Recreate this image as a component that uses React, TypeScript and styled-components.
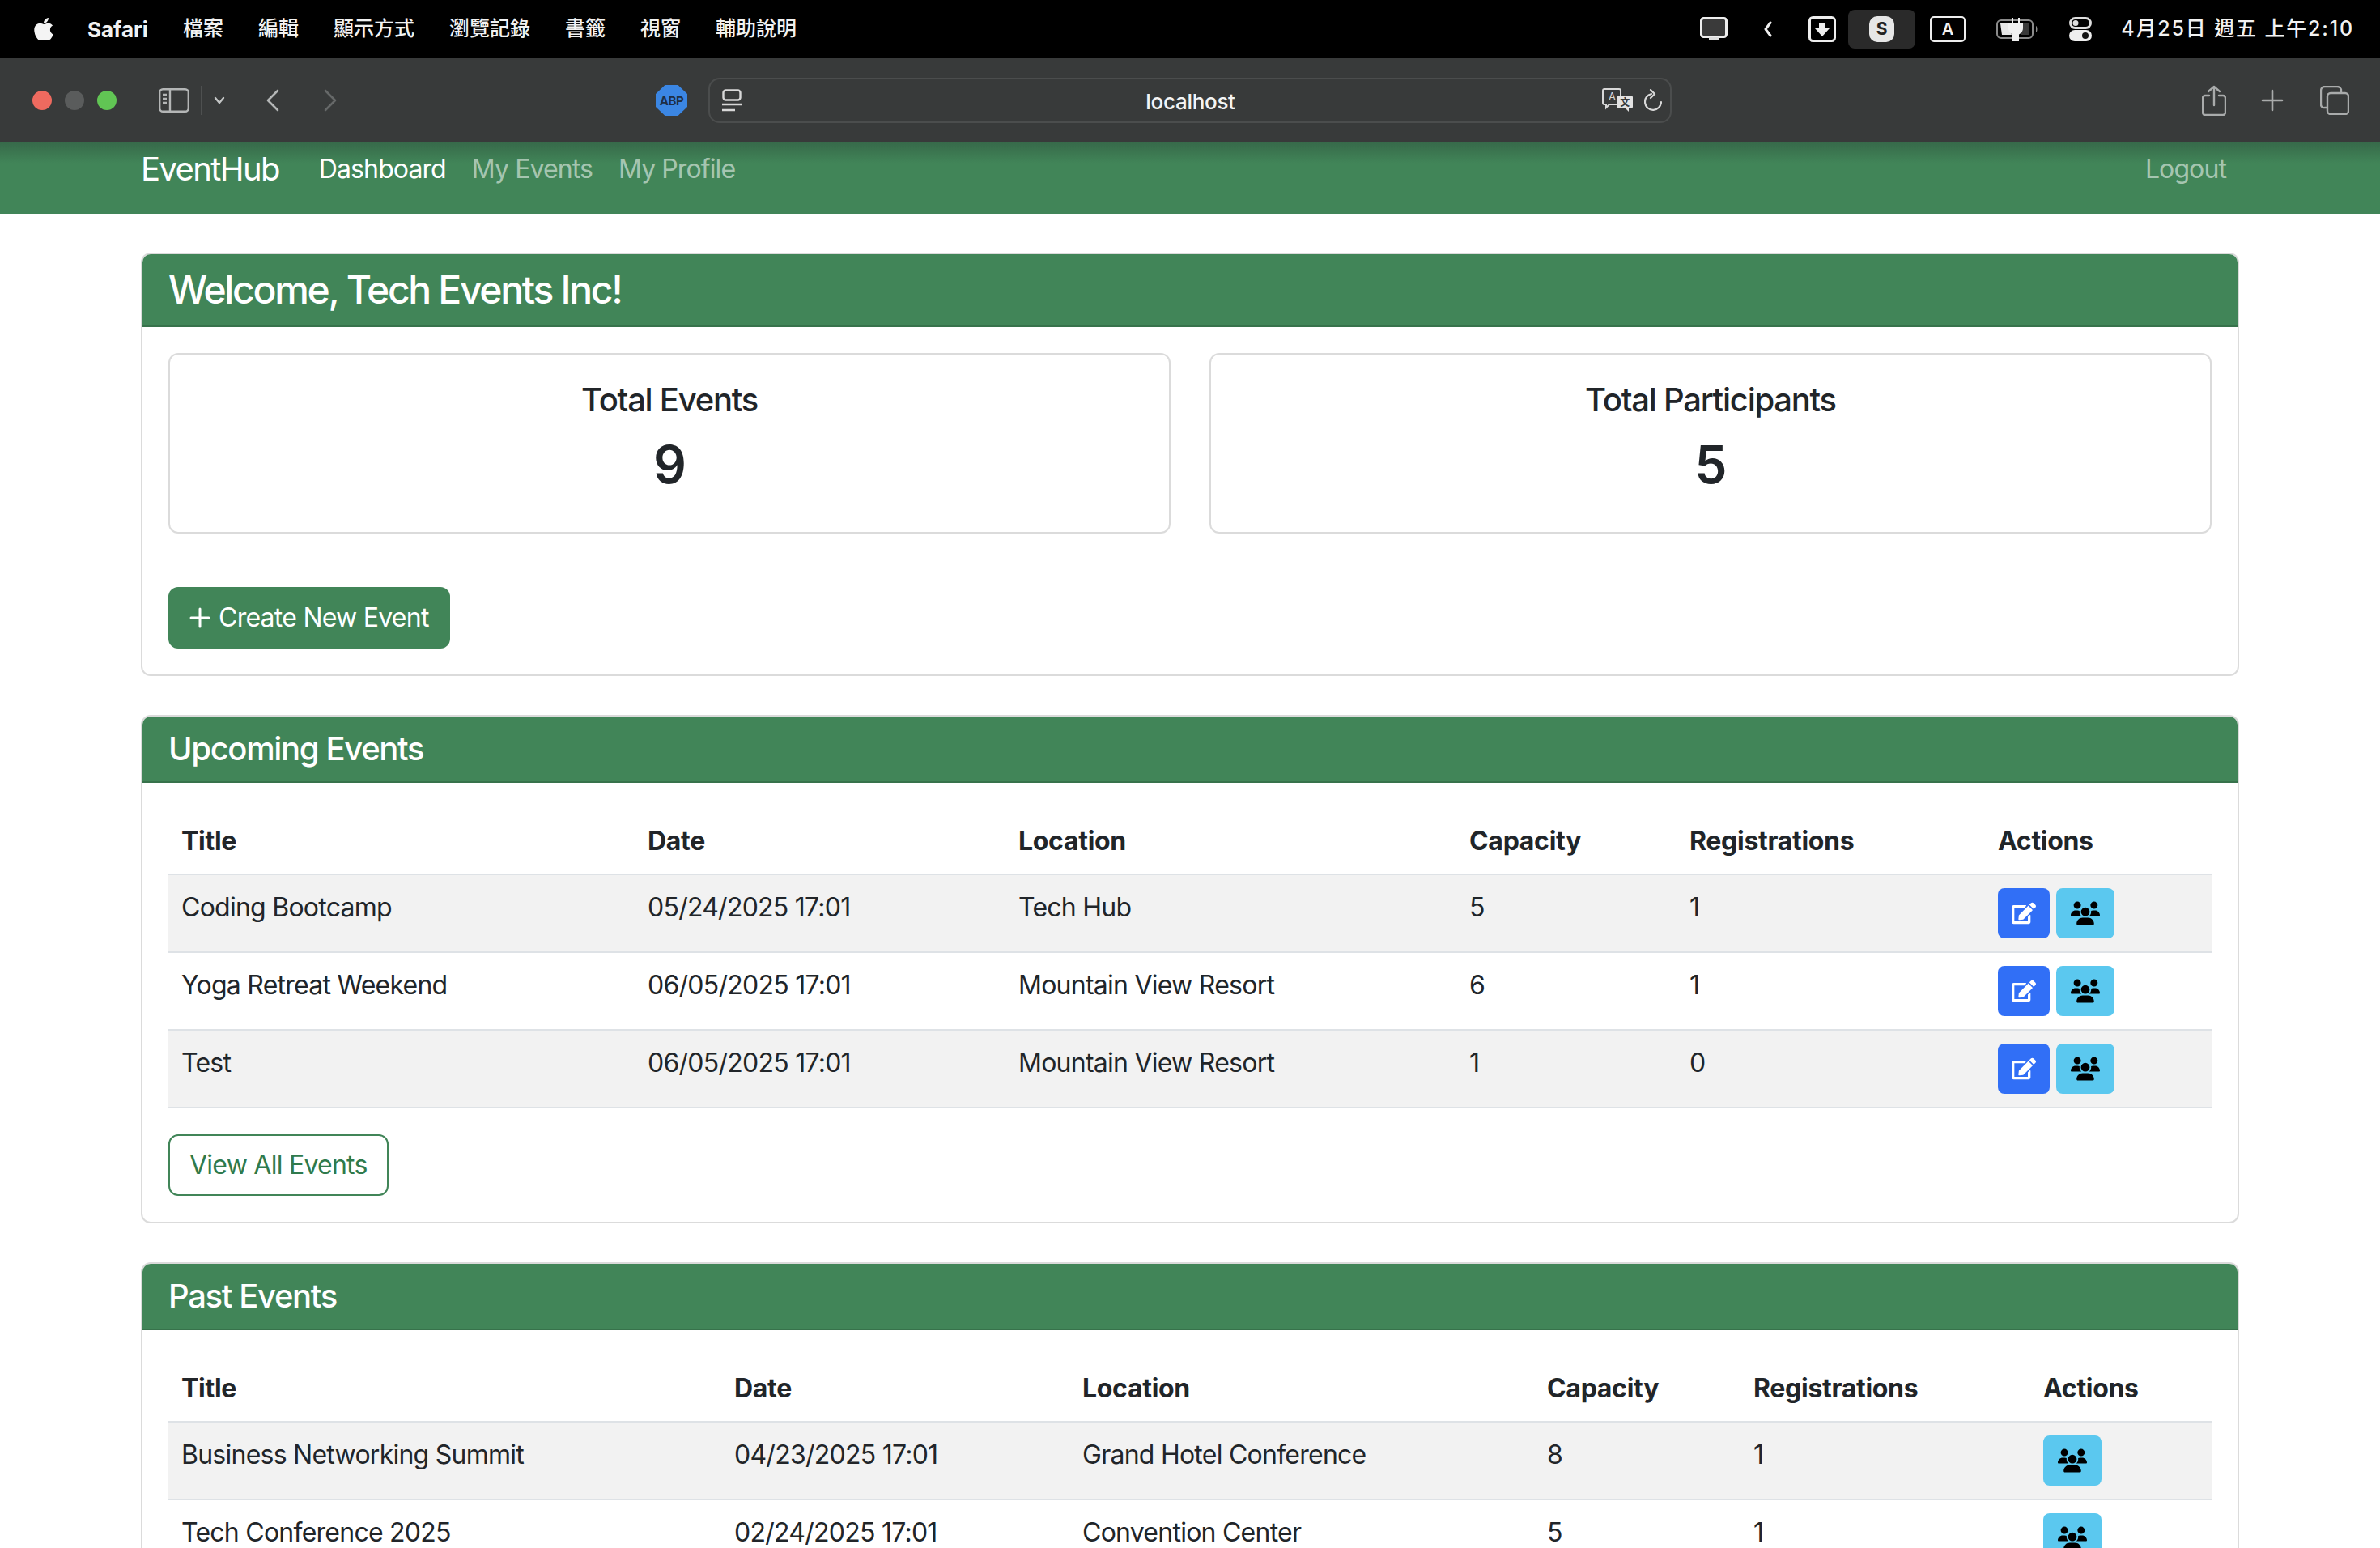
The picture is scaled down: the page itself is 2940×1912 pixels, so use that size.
import React from "react";
import styled, { createGlobalStyle } from "styled-components";
import { FaApple, FaEdit } from "react-icons/fa";
import { FaUsers } from "react-icons/fa6";

const GREEN = "#418558";

const GlobalStyle = createGlobalStyle`
  html, body {
    margin: 0;
    height: 1912px;
    overflow: hidden;
    background: #fff;
  }
  body {
    font-family: Inter, "Noto Sans", sans-serif;
    font-size: 32px;
    line-height: 1.5;
    letter-spacing: -0.75px;
    color: #212529;
  }
  * {
    box-sizing: border-box;
  }
`;

const MenuBar = styled.div`
  display: flex;
  align-items: center;
  justify-content: space-between;
  height: 72px;
  padding: 0 32px 0 38px;
  background: #000;
  color: #f2f2f2;
  font-family: Inter, "Noto Sans CJK TC", sans-serif;
  font-size: 25px;
  letter-spacing: 0;
`;

const MenuGroup = styled.div`
  display: flex;
  align-items: center;
`;

const MenuItem = styled.span<{ $bold?: boolean }>`
  margin-left: ${(p) => (p.$bold ? "38px" : "43px")};
  font-weight: ${(p) => (p.$bold ? 700 : 500)};
  font-size: ${(p) => (p.$bold ? "26px" : "25px")};
  white-space: nowrap;
`;

const Status = styled.div<{ $ml: number }>`
  display: flex;
  margin-left: ${(p) => p.$ml}px;
`;

const Highlight = styled.div`
  display: flex;
  align-items: center;
  justify-content: center;
  width: 83px;
  height: 48px;
  margin-left: 15px;
  border-radius: 8px;
  background: #2a2a2a;
`;

const SBadge = styled.span`
  display: flex;
  align-items: center;
  justify-content: center;
  width: 31px;
  height: 32px;
  border-radius: 10px;
  background: #e6e6e6;
  color: #222;
  font-size: 21px;
  font-weight: 700;
`;

const ABadge = styled.span`
  display: flex;
  align-items: center;
  justify-content: center;
  width: 44px;
  height: 32px;
  margin-left: 18px;
  border: 2px solid #eee;
  border-radius: 5px;
  font-size: 20px;
  font-weight: 600;
`;

const Clock = styled.span`
  margin-left: 36px;
  font-size: 25px;
  font-weight: 500;
  letter-spacing: 1.85px;
  white-space: nowrap;
`;

const Toolbar = styled.div`
  display: flex;
  align-items: center;
  height: 104px;
  padding: 0 38px 0 40px;
  background: #383a3a;
  color: #b4b6b6;
`;

const Lights = styled.div`
  display: flex;
  gap: 16px;
`;

const Light = styled.span<{ $color: string }>`
  width: 24px;
  height: 24px;
  border-radius: 50%;
  background: ${(p) => p.$color};
`;

const ToolIcon = styled.div<{ $ml: number }>`
  display: flex;
  margin-left: ${(p) => p.$ml}px;
`;

const Divider = styled.span`
  width: 2px;
  height: 36px;
  margin-left: 14px;
  background: #4e5050;
`;

const AddressBar = styled.div`
  display: flex;
  align-items: center;
  width: 1190px;
  height: 56px;
  margin-left: 26px;
  padding: 0 10px 0 15px;
  border: 2px solid #4b4d4d;
  border-radius: 14px;
`;

const Url = styled.span`
  flex: 1;
  padding: 2px 0 0 46px;
  color: #f4f4f4;
  font-size: 26px;
  font-weight: 500;
  letter-spacing: -0.3px;
  text-align: center;
`;

const ToolbarRight = styled.div`
  display: flex;
  align-items: center;
  margin-left: auto;
`;

const Navbar = styled.nav`
  height: 88px;
  background: linear-gradient(#376a4a 0, ${GREEN} 26px);
`;

const NavInner = styled.div`
  display: flex;
  align-items: center;
  width: 2592px;
  height: 66px;
  margin: 0 auto;
`;

const Brand = styled.a`
  margin-right: 33px;
  color: #fff;
  font-size: 40px;
  letter-spacing: -1.6px;
`;

const NavLink = styled.a<{ $active?: boolean }>`
  padding: 0 16px;
  color: ${(p) => (p.$active ? "#fff" : "rgba(255, 255, 255, 0.55)")};
  font-size: 32px;
  letter-spacing: -0.9px;
`;

const NavEnd = styled.div`
  margin-left: auto;
`;

const Page = styled.main`
  width: 2592px;
  margin: 0 auto;
  padding-top: 48px;
`;

const Card = styled.section`
  margin-bottom: 48px;
  border: 2px solid rgba(0, 0, 0, 0.14);
  border-radius: 12px;
  background: #fff;
`;

const CardHeader = styled.header`
  padding: 16px 32px;
  border-bottom: 2px solid rgba(0, 0, 0, 0.14);
  border-radius: 10px 10px 0 0;
  background: ${GREEN};
  color: #fff;
`;

const CardTitle = styled.h2<{ $large?: boolean }>`
  margin: 0;
  font-size: ${(p) => (p.$large ? "48px" : "40px")};
  font-weight: 500;
  line-height: ${(p) => (p.$large ? "56px" : "48px")};
  letter-spacing: ${(p) => (p.$large ? "-2.3px" : "-1.35px")};
`;

const CardBody = styled.div`
  padding: 32px;
`;

const Stats = styled.div`
  display: grid;
  grid-template-columns: 1fr 1fr;
  gap: 48px;
  margin-bottom: 66px;
`;

const StatCard = styled.div`
  padding: 32px;
  border: 2px solid rgba(0, 0, 0, 0.14);
  border-radius: 12px;
  text-align: center;
`;

const StatLabel = styled.h3`
  margin: 0 0 18px;
  font-size: 40px;
  font-weight: 500;
  line-height: 1.2;
  letter-spacing: -1.25px;
`;

const StatValue = styled.p`
  margin: 0 0 12px;
  font-size: 64px;
  font-weight: 600;
  line-height: 1.2;
`;

const Button = styled.a<{ $outline?: boolean }>`
  display: inline-flex;
  align-items: center;
  height: 76px;
  padding: 0 24px;
  border: 2px solid ${GREEN};
  border-radius: 12px;
  background: ${(p) => (p.$outline ? "#fff" : GREEN)};
  color: ${(p) => (p.$outline ? "#2f7a4c" : "#fff")};
  font-size: 32px;
`;

const PlusMark = styled.svg`
  margin-right: 10px;
`;

const Table = styled.table`
  width: 100%;
  margin-bottom: 32px;
  border-collapse: collapse;
  table-layout: fixed;
`;

const Column = styled.col<{ $w: number }>`
  width: ${(p) => p.$w}px;
`;

const Th = styled.th`
  padding: 16px;
  border-bottom: 2px solid #dee2e6;
  font-weight: 700;
  letter-spacing: -0.3px;
  text-align: left;
`;

const Row = styled.tr`
  &:nth-child(odd) {
    background: #f2f2f2;
  }
`;

const Td = styled.td`
  height: 96px;
  padding: 16px;
  border-bottom: 2px solid #dee2e6;
  vertical-align: top;
  white-space: nowrap;
`;

const Actions = styled.div`
  display: flex;
  gap: 8px;
`;

const ActionButton = styled.a<{ $kind: "edit" | "people" }>`
  display: flex;
  align-items: center;
  justify-content: center;
  width: ${(p) => (p.$kind === "edit" ? "64px" : "72px")};
  height: 62px;
  border-radius: 8px;
  background: ${(p) => (p.$kind === "edit" ? "#316ff6" : "#5bc8ef")};
  color: ${(p) => (p.$kind === "edit" ? "#fff" : "#000")};
`;

type EventRow = {
  title: string;
  date: string;
  location: string;
  capacity: number;
  registrations: number;
};

const upcoming: EventRow[] = [
  { title: "Coding Bootcamp", date: "05/24/2025 17:01", location: "Tech Hub", capacity: 5, registrations: 1 },
  { title: "Yoga Retreat Weekend", date: "06/05/2025 17:01", location: "Mountain View Resort", capacity: 6, registrations: 1 },
  { title: "Test", date: "06/05/2025 17:01", location: "Mountain View Resort", capacity: 1, registrations: 0 },
];

const past: EventRow[] = [
  { title: "Business Networking Summit", date: "04/23/2025 17:01", location: "Grand Hotel Conference", capacity: 8, registrations: 1 },
  { title: "Tech Conference 2025", date: "02/24/2025 17:01", location: "Convention Center", capacity: 5, registrations: 1 },
];

const EventsTable = ({ rows, widths, editable }: { rows: EventRow[]; widths: number[]; editable?: boolean }) => (
  <Table>
    <colgroup>
      {widths.map((w, i) => (
        <Column key={i} $w={w} />
      ))}
    </colgroup>
    <thead>
      <tr>
        {["Title", "Date", "Location", "Capacity", "Registrations", "Actions"].map((h) => (
          <Th key={h}>{h}</Th>
        ))}
      </tr>
    </thead>
    <tbody>
      {rows.map((r) => (
        <Row key={r.title}>
          <Td>{r.title}</Td>
          <Td>{r.date}</Td>
          <Td>{r.location}</Td>
          <Td>{r.capacity}</Td>
          <Td>{r.registrations}</Td>
          <Td>
            <Actions>
              {editable && (
                <ActionButton $kind="edit">
                  <FaEdit size={30} />
                </ActionButton>
              )}
              <ActionButton $kind="people">
                <FaUsers size={36} />
              </ActionButton>
            </Actions>
          </Td>
        </Row>
      ))}
    </tbody>
  </Table>
);

const MonitorIcon = () => (
  <svg width="34" height="30" viewBox="0 0 34 30">
    <rect x="1.5" y="1.5" width="31" height="23" rx="3" fill="#3a3a3a" stroke="#eee" strokeWidth="3" />
    <rect x="11" y="25" width="12" height="4" fill="#ddd" />
  </svg>
);

const ChevronLeft = ({ w, h, color, sw }: { w: number; h: number; color: string; sw: number }) => (
  <svg width={w} height={h} viewBox={`0 0 ${w} ${h}`} fill="none">
    <path d={`M${w - 2} 2 L2 ${h / 2} L${w - 2} ${h - 2}`} stroke={color} strokeWidth={sw} strokeLinecap="round" strokeLinejoin="round" />
  </svg>
);

const ChevronRight = ({ w, h, color, sw }: { w: number; h: number; color: string; sw: number }) => (
  <svg width={w} height={h} viewBox={`0 0 ${w} ${h}`} fill="none">
    <path d={`M2 2 L${w - 2} ${h / 2} L2 ${h - 2}`} stroke={color} strokeWidth={sw} strokeLinecap="round" strokeLinejoin="round" />
  </svg>
);

const DownloadBox = () => (
  <svg width="34" height="32" viewBox="0 0 34 32">
    <rect x="1.5" y="1.5" width="31" height="29" rx="4" fill="none" stroke="#eee" strokeWidth="3" />
    <path d="M13 8h8v7h5l-9 10-9-10h5z" fill="#eee" />
  </svg>
);

const BatteryIcon = () => (
  <svg width="52" height="30" viewBox="0 0 52 30">
    <rect x="1" y="4" width="44" height="22" rx="5" fill="none" stroke="#8b8b8b" strokeWidth="2" />
    <path d="M5 8h10l4 14H7z" fill="#e6e6e6" />
    <path d="M30 8h10v14h-10z" fill="#e6e6e6" opacity="0.25" />
    <path d="M49 11c2 1 2 7 0 8z" fill="#8b8b8b" />
    <path d="M20 1v7M28 1v7M16 9h16v5c0 4-3 6-5 7v8h-6v-8c-2-1-5-3-5-7z" fill="#f0f0f0" stroke="#f0f0f0" strokeWidth="2" />
  </svg>
);

const ControlCenter = () => (
  <svg width="28" height="30" viewBox="0 0 28 30">
    <rect x="1.5" y="1.5" width="25" height="12" rx="6" fill="none" stroke="#ddd" strokeWidth="3" />
    <circle cx="8" cy="7.5" r="3.5" fill="#ddd" />
    <rect y="16" width="28" height="14" rx="7" fill="#eee" />
    <circle cx="20" cy="23" r="4" fill="#111" />
  </svg>
);

const SidebarIcon = () => (
  <svg width="38" height="30" viewBox="0 0 38 30" fill="none" stroke="#b4b6b6" strokeWidth="2.4">
    <rect x="1.2" y="1.2" width="35.6" height="27.6" rx="4" />
    <path d="M14 1v28" />
    <path d="M5 8h5M5 13h5M5 18h5" />
  </svg>
);

const AbpIcon = () => (
  <svg width="39" height="38" viewBox="0 0 39 38">
    <path d="M11.5 0h16L39 11v16L27.5 38h-16L0 27V11z" fill="#3b86e3" />
    <text x="19.5" y="25" textAnchor="middle" fontFamily="Inter, sans-serif" fontSize="15" fontWeight="700" letterSpacing="-0.5" fill="#1f2f44">
      ABP
    </text>
  </svg>
);

const ReaderIcon = () => (
  <svg width="24" height="28" viewBox="0 0 24 28" fill="none" stroke="#d8d8d8" strokeWidth="2.4">
    <rect x="1.5" y="1.5" width="21" height="12" rx="3" />
    <path d="M0 19h24M0 26h16" />
  </svg>
);

const TranslateIcon = () => (
  <svg width="38" height="30" viewBox="0 0 38 30">
    <path d="M3 1h18a2 2 0 0 1 2 2v15a2 2 0 0 1-2 2H9l-4 4v-4H3a2 2 0 0 1-2-2V3a2 2 0 0 1 2-2z" fill="#383a3a" stroke="#d8d8d8" strokeWidth="2" />
    <text x="12" y="15" textAnchor="middle" fontFamily="Inter, sans-serif" fontSize="13" fill="#d8d8d8">
      A
    </text>
    <path d="M20 9h16a2 2 0 0 1 2 2v12a2 2 0 0 1-2 2h-3v4l-4-4H20a2 2 0 0 1-2-2V11a2 2 0 0 1 2-2z" fill="#e2e2e2" />
    <text x="28" y="22" textAnchor="middle" fontFamily="'Noto Sans CJK TC', sans-serif" fontSize="12" fontWeight="700" fill="#383a3a">
      文
    </text>
  </svg>
);

const ReloadIcon = () => (
  <svg width="22" height="28" viewBox="0 0 22 28" fill="none" stroke="#d8d8d8" strokeWidth="2.2" strokeLinecap="round" strokeLinejoin="round">
    <path d="M9 6a10 10 0 1 0 12 10" />
    <path d="M8 1l5 5-5 5" />
  </svg>
);

const ShareIcon = () => (
  <svg width="30" height="38" viewBox="0 0 30 38" fill="none" stroke="#a9abab" strokeWidth="2.4" strokeLinecap="round" strokeLinejoin="round">
    <path d="M9 13H4a3 3 0 0 0-3 3v18a3 3 0 0 0 3 3h22a3 3 0 0 0 3-3V16a3 3 0 0 0-3-3h-5" />
    <path d="M15 25V2M8 8l7-6 7 6" />
  </svg>
);

const PlusTool = () => (
  <svg width="28" height="28" viewBox="0 0 28 28" stroke="#a9abab" strokeWidth="2.6" strokeLinecap="round">
    <path d="M14 2v24M2 14h24" />
  </svg>
);

const TabsIcon = () => (
  <svg width="36" height="36" viewBox="0 0 36 36" fill="none" stroke="#a9abab" strokeWidth="2.4">
    <rect x="9" y="9" width="26" height="26" rx="4" />
    <path d="M9 27H6a4 4 0 0 1-5-4V6a5 5 0 0 1 5-5h15a5 5 0 0 1 5 5v3" />
  </svg>
);

const App = () => (
  <>
    <GlobalStyle />
    <MenuBar>
      <MenuGroup>
        <FaApple size={32} color="#f4f4f4" />
        <MenuItem $bold>Safari</MenuItem>
        {["檔案", "編輯", "顯示方式", "瀏覽記錄", "書籤", "視窗", "輔助說明"].map((m) => (
          <MenuItem key={m}>{m}</MenuItem>
        ))}
      </MenuGroup>
      <MenuGroup>
        <MonitorIcon />
        <Status $ml={45}>
          <ChevronLeft w={10} h={20} color="#eee" sw={3} />
        </Status>
        <Status $ml={45}>
          <DownloadBox />
        </Status>
        <Highlight>
          <SBadge>S</SBadge>
        </Highlight>
        <ABadge>A</ABadge>
        <Status $ml={38}>
          <BatteryIcon />
        </Status>
        <Status $ml={38}>
          <ControlCenter />
        </Status>
        <Clock>4月25日 週五 上午2:10</Clock>
      </MenuGroup>
    </MenuBar>

    <Toolbar>
      <Lights>
        <Light $color="#ee6a5f" />
        <Light $color="#5a5c5c" />
        <Light $color="#61c554" />
      </Lights>
      <ToolIcon $ml={52}>
        <SidebarIcon />
      </ToolIcon>
      <Divider />
      <ToolIcon $ml={14}>
        <svg width="14" height="10" viewBox="0 0 14 10" fill="none" stroke="#c4c6c6" strokeWidth="2.4" strokeLinecap="round" strokeLinejoin="round">
          <path d="M2 2l5 6 5-6" />
        </svg>
      </ToolIcon>
      <ToolIcon $ml={51}>
        <ChevronLeft w={16} h={28} color="#b4b6b6" sw={2.6} />
      </ToolIcon>
      <ToolIcon $ml={55}>
        <ChevronRight w={16} h={28} color="#666868" sw={2.6} />
      </ToolIcon>
      <ToolIcon $ml={394}>
        <AbpIcon />
      </ToolIcon>
      <AddressBar>
        <ReaderIcon />
        <Url>localhost</Url>
        <TranslateIcon />
        <ToolIcon $ml={14}>
          <ReloadIcon />
        </ToolIcon>
      </AddressBar>
      <ToolbarRight>
        <ShareIcon />
        <ToolIcon $ml={43}>
          <PlusTool />
        </ToolIcon>
        <ToolIcon $ml={45}>
          <TabsIcon />
        </ToolIcon>
      </ToolbarRight>
    </Toolbar>

    <Navbar>
      <NavInner>
        <Brand>EventHub</Brand>
        <NavLink $active>Dashboard</NavLink>
        <NavLink>My Events</NavLink>
        <NavLink>My Profile</NavLink>
        <NavEnd>
          <NavLink>Logout</NavLink>
        </NavEnd>
      </NavInner>
    </Navbar>

    <Page>
      <Card>
        <CardHeader>
          <CardTitle $large>Welcome, Tech Events Inc!</CardTitle>
        </CardHeader>
        <CardBody>
          <Stats>
            <StatCard>
              <StatLabel>Total Events</StatLabel>
              <StatValue>9</StatValue>
            </StatCard>
            <StatCard>
              <StatLabel>Total Participants</StatLabel>
              <StatValue>5</StatValue>
            </StatCard>
          </Stats>
          <Button>
            <PlusMark width="26" height="26" viewBox="0 0 26 26" stroke="#fff" strokeWidth="3" strokeLinecap="round">
              <path d="M13 2v22M2 13h22" />
            </PlusMark>
            Create New Event
          </Button>
        </CardBody>
      </Card>

      <Card>
        <CardHeader>
          <CardTitle>Upcoming Events</CardTitle>
        </CardHeader>
        <CardBody>
          <EventsTable rows={upcoming} widths={[576, 458, 557, 272, 381, 280]} editable />
          <Button $outline>View All Events</Button>
        </CardBody>
      </Card>

      <Card>
        <CardHeader>
          <CardTitle>Past Events</CardTitle>
        </CardHeader>
        <CardBody>
          <EventsTable rows={past} widths={[683, 430, 574, 255, 358, 224]} />
        </CardBody>
      </Card>
    </Page>
  </>
);

export default App;
